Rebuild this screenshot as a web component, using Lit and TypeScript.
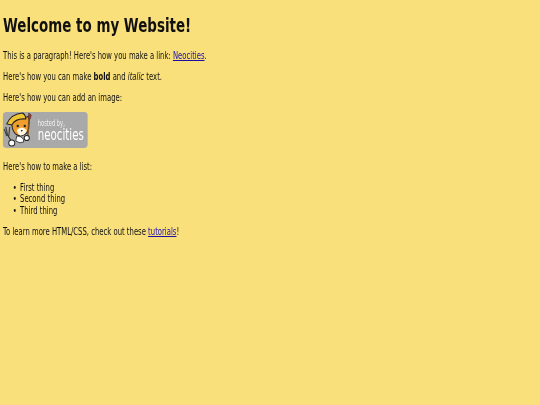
import { LitElement, html, css } from "lit";
import { customElement } from "lit/decorators.js";

@customElement("app-root")
export class AppRoot extends LitElement {
  static styles = css`
    :host {
      display: block;
      height: 405px;
      background: #f9e07a;
      color: #111;
      font-family: "DejaVu Sans", sans-serif;
      font-size: 10px;
      line-height: 11.6px;
      overflow: hidden;
    }
    .page {
      width: 790px;
      box-sizing: border-box;
      padding: 14px 0 0 4.4px;
      transform: scaleX(0.686);
      transform-origin: 0 0;
      filter: blur(0.3px);
    }
    h1 {
      margin: 0 0 12px;
      font-size: 19.6px;
      line-height: 24px;
      font-weight: 700;
    }
    p { margin: 0 0 9.6px; }
    a { color: #1a0dab; }
    ul { margin: 0 0 9.6px; padding: 0 0 0 24.8px; list-style: none; }
    li::before { content: "•"; display: inline-block; width: 10.5px; margin-left: -10.5px; }
    .logo { display: block; width: 124px; height: 36px; margin: -2px 0 13px; }
    .hosted { font: 8px "DejaVu Sans", sans-serif; fill: #f2f2f2; }
    .neo { font: 16.5px "DejaVu Sans", sans-serif; fill: #fff; }
  `;

  render() {
    return html`<div class="page">
      <h1>Welcome to my Website!</h1>
      <p>This is a paragraph! Here's how you make a link: <a href="#">Neocities</a>.</p>
      <p>Here's how you can make <strong>bold</strong> and <em>italic</em> text.</p>
      <p>Here's how you can add an image:</p>
      <svg class="logo" viewBox="0 0 85 36" preserveAspectRatio="none" aria-label="Hosted by Neocities">
        <rect width="85" height="36" rx="4" fill="#a9a9a9" />
        <path d="M3 15 L5 24 M1.5 17 L4 24 M7 15 L6 24" stroke="#444" stroke-width="1.2" fill="none" />
        <path d="M5.5 24 L9 30" stroke="#333" stroke-width="1.2" />
        <path d="M9 10 Q14 5 21 6 L27 4 L26 13 Q27 22 18 24 Q9 23 9 10Z" fill="#ef9d2d" stroke="#222" stroke-width="1" />
        <path d="M4 12 Q8 2 20 1 Q23 3 23 7 Q13 6 9 13Z" fill="#f0c330" stroke="#222" stroke-width="1" />
        <path d="M14 18 Q19 13 24 18 Q23 23 18 23.5 Q15 23 14 18Z" fill="#fff6e5" />
        <circle cx="15" cy="14" r="1.2" fill="#222" /><circle cx="22" cy="14" r="1.2" fill="#222" />
        <path d="M18 18 L20 18 L19 20Z" fill="#222" />
        <path d="M14 24 Q21 24 21 30 Q17 32 13 29Z" fill="#fff" stroke="#222" stroke-width=".8" />
        <path d="M26.5 6 L25 24" stroke="#7a5324" stroke-width="1.6" />
        <path d="M26 1 L28.5 3 L27.5 7 L25.5 7Z" fill="#b5352a" stroke="#222" stroke-width=".5" />
        <circle cx="9" cy="31" r="3" fill="#fff" stroke="#222" stroke-width="1" />
        <circle cx="24" cy="26" r="2.6" fill="#fff" stroke="#222" stroke-width="1" />
        <text class="hosted" x="35" y="14.5" textLength="27" lengthAdjust="spacingAndGlyphs">hosted by,</text>
        <text class="neo" x="35" y="28.5" textLength="46" lengthAdjust="spacingAndGlyphs">neocities</text>
      </svg>
      <p>Here's how to make a list:</p>
      <ul>
        <li>First thing</li>
        <li>Second thing</li>
        <li>Third thing</li>
      </ul>
      <p>To learn more HTML/CSS, check out these <a href="#">tutorials</a>!</p>
    </div>`;
  }
}
